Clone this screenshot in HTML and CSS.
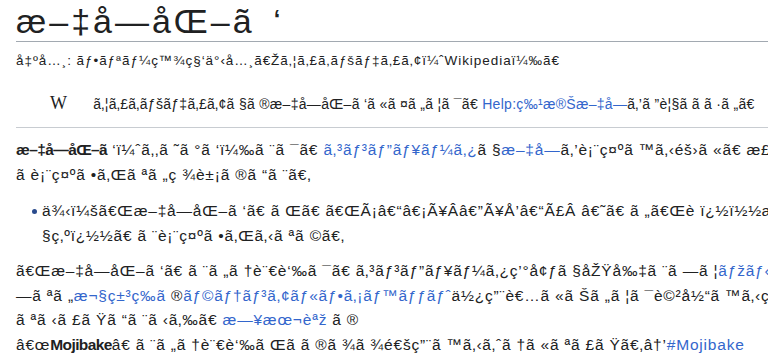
FILE: index.html
```html
<!DOCTYPE html>
<html lang="ja">
<head>
  <meta charset="UTF-8" />
  <meta name="viewport" content="width=device-width, initial-scale=1.0"/>
  <title>æ–‡å—åŒ–ã ‘</title>
  <link rel="stylesheet" href="styles.css">
</head>
<body>

<div class="page">
  <h1 class="title">æ–‡å—åŒ–ã ‘</h1>
  <div class="tagline">å‡ºå…¸: ãƒ•ãƒªãƒ¼ç™¾ç§‘ä°‹å…¸ã€Žã‚¦ã‚£ã‚­ãƒšãƒ‡ã‚£ã‚¢ï¼ˆWikipediaï¼‰ã€</div>

  <div class="hatnote">
    <span class="wiki-w">W</span>
    <span>ã‚¦ã‚£ã‚­ãƒšãƒ‡ã‚£ã‚¢ã §ã ®æ–‡å—åŒ–ã ‘ã «ã ¤ã „ã ¦ã ¯ã€ <a href="#">Help:ç‰¹æ®Šæ–‡å—</a>ã‚’ã ”è¦§ã   ã  ã ·ã „ã€</span>
  </div>

  <div class="article">
    <p class="para">
      <span class="ln"><b>æ–‡å—åŒ–ã</b> ‘ï¼ˆã‚‚ã ˜ã °ã ‘ï¼‰ã ¨ã ¯ã€ <a href="#">ã‚³ãƒ³ãƒ”ãƒ¥ãƒ¼ã‚¿</a>ã §<a href="#">æ–‡å—</a>ã‚’è¡¨ç¤ºã ™ã‚‹éš›ã «ã€ æ£ã ·ã „</span>
      <span class="ln">ã  è¡¨ç¤ºã •ã‚Œã ªã „ç ¾è±¡ã ®ã “ã ¨ã€‚</span>
    </p>

    <ul class="examples">
      <li>
        <span class="ln">ä¾‹ï¼šã€Œæ–‡å—åŒ–ã ‘ã€ ã Œã€ ã€ŒÃ¡â€“â€¡Ã¥Ââ€”Ã¥Å’â€“Ã£Â â€˜ã€ ã „ã€Œè ï¿½ï½½æ€œã ï¿½</span>
        <span class="ln">§ç‚ºï¿½½ã€ ã ¨è¡¨ç¤ºã •ã‚Œã‚‹ã ªã ©ã€‚</span>
      </li>
    </ul>

    <p class="para">
      <span class="ln">ã€Œæ–‡å—åŒ–ã ‘ã€ ã ¨ã „ã †è¨€è‘‰ã ¯ã€ ã‚³ãƒ³ãƒ”ãƒ¥ãƒ¼ã‚¿ç’°å¢ƒã §åŽŸå‰‡ã ¨ã —ã ¦<a href="#">ãƒžãƒ«ãƒ ãƒ</a></span>
      <span class="ln">—ã ªã „<a href="#">æ¬§ç±³ç‰ã</a> ®<a href="#">ãƒ©ãƒ†ãƒ³ã‚¢ãƒ«ãƒ•ã‚¡ãƒ™ãƒƒãƒˆ</a>ä½¿ç”¨è€…ã «ã Šã „ã ¦ã ¯è©²å½“ã ™ã‚‹ç”¨è</span>
      <span class="ln">ã ªã ‹ã £ã Ÿã “ã ¨ã ‹ã‚‰ã€ <a href="#">æ—¥æœ¬èªž</a> ã ®</span>
      <span class="ln">â€œ<b>Mojibake</b>â€ ã ¨ã „ã †è¨€è‘‰ã Œã  ã ®ã ¾ã ¾é€šç”¨ã ™ã‚‹ã‚ˆã †ã «ã ªã £ã Ÿã€‚â†’<a href="#">#Mojibake</a></span>
    </p>
  </div>
</div>

</body>
</html>
```

FILE: styles.css
```css
body {
  margin: 0;
  padding: 0;
  background: #fff;
  color: #202122;
  font-family: "Liberation Sans", Arial, sans-serif;
  overflow: hidden;
}
a {
  color: #3366cc;
  text-decoration: none;
}
.page {
  padding: 0 0 0 16px;
}
.title {
  margin: 0;
  padding: 3px 0 2px;
  font-size: 34px;
  line-height: 36px;
  font-weight: normal;
  letter-spacing: 3px;
  word-spacing: 6px;
  white-space: nowrap;
  border-bottom: 1px solid #a2a9b1;
}
.tagline {
  margin-top: 9px;
  font-size: 13.5px;
  letter-spacing: 0.95px;
  line-height: 20px;
  white-space: nowrap;
  color: #202122;
}
.hatnote {
  margin-top: 22px;
  padding: 0 0 13px 34px;
  font-size: 14px;
  letter-spacing: 0.3px;
  line-height: 20px;
  white-space: nowrap;
  border-bottom: 1px solid #c8ccd1;
}
.wiki-w {
  font-family: "Liberation Serif", "Times New Roman", serif;
  font-size: 18px;
  letter-spacing: 0;
  margin-right: 22px;
}
.article {
  font-size: 15.5px;
  letter-spacing: 0.8px;
  line-height: 24.5px;
}
.article b {
  letter-spacing: -0.6px;
}
.para {
  margin: 10px 0 0;
}
.ln {
  display: block;
  white-space: nowrap;
}
.examples {
  margin: 12px 0 11px;
  padding: 0 0 0 26px;
  list-style: none;
}
.examples li {
  position: relative;
}
.examples li::before {
  content: "";
  position: absolute;
  left: -10px;
  top: 10px;
  width: 5px;
  height: 5px;
  border-radius: 50%;
  background: #2a4b8d;
}
.examples + .para {
  margin-top: 11px;
}
```
